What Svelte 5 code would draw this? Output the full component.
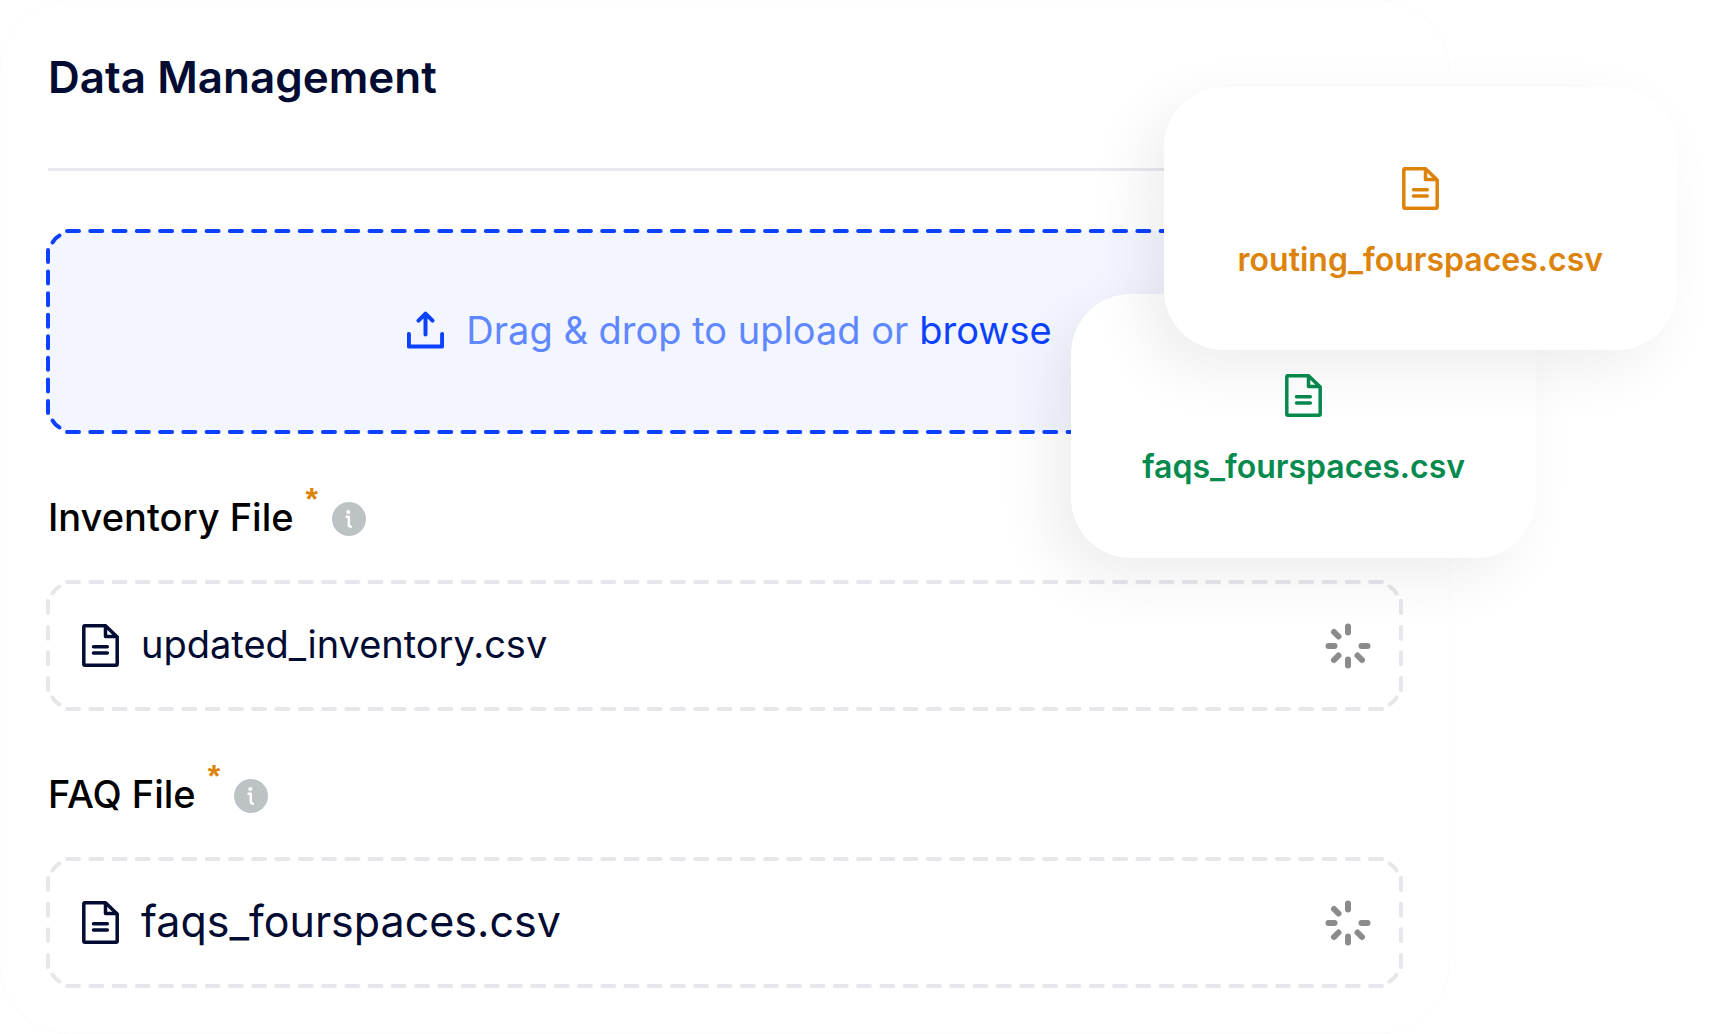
<script>
	const files = [
		{ id: 'inventory', label: 'Inventory File', name: 'updated_inventory.csv', large: false },
		{ id: 'faq', label: 'FAQ File', name: 'faqs_fourspaces.csv', large: true }
	]
	const cards = [
		{ name: 'faqs_fourspaces.csv', kind: 'faqs' },
		{ name: 'routing_fourspaces.csv', kind: 'routing' }
	]

	// gap that lets a side start and end on a full dash
	const dashes = (length, count) => `12 ${(length - 12) / count - 12}`
</script>

{#snippet side(x1, y1, x2, y2, length, count)}
	<line {x1} {y1} {x2} {y2} pathLength={length} stroke-dasharray={dashes(length, count)} />
{/snippet}

{#snippet corner(x, y, angle)}
	<svg {x} {y} width="1" height="1" overflow="visible">
		<path d="M4.500 11.500Q7 7 11.500 4.500" transform="rotate({angle})" />
	</svg>
{/snippet}

{#snippet dashedFrame(height, count)}
	<svg class="frame" aria-hidden="true">
		<svg class="rows" x="19" width="100%" height="100%" overflow="visible">
			{@render side('0', '0', '100%', '0', 1316, 56)}
			{@render side('0', '100%', '100%', '100%', 1316, 56)}
		</svg>
		<svg y="19" width="100%" height={height - 38} overflow="visible">
			{@render side('0', '0', '0', '100%', height - 38, count)}
			{@render side('100%', '0', '100%', '100%', height - 38, count)}
		</svg>
		{@render corner('0', '0', 0)}
		{@render corner('100%', '0', 90)}
		{@render corner('100%', '100%', 180)}
		{@render corner('0', '100%', 270)}
	</svg>
{/snippet}

{#snippet docIcon()}
	<svg class="docIcon" width="37" height="43" viewBox="0 0 37 43" aria-hidden="true">
		<path d="M3 1.700H23.500L35.200 13V40Q35.200 41.200 34 41.200H3Q1.800 41.200 1.800 40V3Q1.800 1.700 3 1.700Z" />
		<path d="M23.500 2.500V12.600H34.500M11.500 22.800H25.300M11.500 29.100H25.300" />
	</svg>
{/snippet}

<div class="page">
	<main class="panel">
		<h1>Data Management</h1>
		<hr />
		<div class="upload">
			{@render dashedFrame(201, 7)}
			<svg class="uploadIcon" width="37" height="38" viewBox="0 0 37 38" aria-hidden="true">
				<path d="M1.900 23V35.500H35.100V23M18.500 23.500V3M11.500 9.700L18.500 2.700L25.500 9.700" />
			</svg>
			<span>Drag &amp; drop to upload or</span>
			<button type="button" class="browse">browse</button>
		</div>

		{#each files as { id, label, name, large }}
			<section aria-labelledby={id}>
				<div class="labelRow">
					<h2 {id}>{label}</h2>
					<span class="required">*</span>
					<button type="button" class="info" aria-label="About {label}">
						<svg width="34" height="34" viewBox="0 0 34 34" aria-hidden="true">
							<circle cx="17" cy="17" r="17" fill="#bdc3c4" />
							<circle cx="16.300" cy="10" r="2" fill="#fff" />
							<path d="M14.600 14.700H16.800V22.500Q16.800 24.500 19 24.700" fill="none" stroke="#fff" stroke-width="2.500" stroke-linecap="round" stroke-linejoin="round" />
						</svg>
					</button>
				</div>
				<div class="fileBox">
					{@render dashedFrame(127, 3)}
					{@render docIcon()}
					<span class="fileName" class:large>{name}</span>
					<svg class="spinner" width="46" height="46" viewBox="-23 -23 46 46" role="img" aria-label="Loading">
						<path d="M0 -19.500V-13.500M0 13.500V19.500M-19.500 0H-13.500M13.500 0H19.500M-14 -14L-9.500 -9.500M-14 14L-9.500 9.500M14 14L9.500 9.500" />
					</svg>
				</div>
			</section>
		{/each}
	</main>

	{#each cards as { name, kind }}
		<div class="card {kind}">
			{@render docIcon()}
			<span>{name}</span>
		</div>
	{/each}
</div>

<style>
	:global(body) {
		background: #fff;
	}
	.page {
		position: relative;
		font-family: 'Inter', 'Liberation Sans', sans-serif;
		color: #020b32;
	}
	.panel {
		margin-right: 262px;
		padding: 50px 48px 48px;
		border-radius: 70px;
		background: #fff;
		box-shadow: inset 0 0 1px rgba(0, 0, 0, 0.08);
	}
	h1 {
		margin: 0;
		font-size: 44px;
		font-weight: 600;
		line-height: 54px;
	}
	hr {
		height: 3px;
		margin: 64px 0 60px;
		border: 0;
		background: #e8e8ed;
	}
	button {
		padding: 0;
		border: 0;
		background: none;
		font: inherit;
		cursor: pointer;
	}
	svg {
		flex: none;
	}
	.upload {
		position: relative;
		display: flex;
		align-items: center;
		justify-content: center;
		height: 201px;
		padding: 0 0 4px 10px;
		box-sizing: border-box;
		border-radius: 24px;
		background: #f3f6ff;
		color: #5f87ff;
		font-size: 38px;
		line-height: 46px;
	}
	.uploadIcon {
		margin-right: 22px;
		fill: none;
		stroke: #0b41ff;
		stroke-width: 4;
		stroke-linecap: round;
		stroke-linejoin: round;
	}
	.browse {
		margin-left: 11px;
		color: #0b41ff;
	}
	.frame {
		position: absolute;
		inset: 0;
		width: 100%;
		height: 100%;
		overflow: visible;
		fill: none;
		stroke: #e6e7eb;
		stroke-width: 4;
		stroke-linecap: round;
		pointer-events: none;
	}
	.rows {
		width: calc(100% - 38px);
	}
	.upload .frame {
		stroke: #0b41ff;
	}
	.labelRow {
		display: flex;
		align-items: flex-start;
		margin: 62px 0 42px;
	}
	h2 {
		margin: 0;
		color: #000;
		font-size: 38px;
		font-weight: 500;
		line-height: 46px;
	}
	.required {
		margin: -11px 14px 0 12px;
		color: #dd830a;
		font: bold 32px/32px 'Liberation Sans', sans-serif;
	}
	.info {
		height: 34px;
		margin-top: 8px;
	}
	.info svg {
		display: block;
	}
	.fileBox {
		position: relative;
		display: flex;
		align-items: center;
		height: 127px;
		padding: 0 30px 0 34px;
		box-sizing: border-box;
	}
	.fileName {
		margin: 0 auto 4px 22px;
		font-size: 38px;
		line-height: 52px;
	}
	.fileName.large {
		font-size: 43px;
	}
	.docIcon {
		fill: none;
		stroke: currentColor;
		stroke-width: 3.5;
		stroke-linecap: round;
		stroke-linejoin: round;
	}
	.spinner {
		fill: none;
		stroke: #8b8b8b;
		stroke-width: 6;
		stroke-linecap: round;
	}
	/* file cards floating over the panel */
	.card {
		position: absolute;
		display: flex;
		flex-direction: column;
		align-items: center;
		gap: 30px;
		padding: 80px 71px 71px;
		border-radius: 60px;
		background: #fff;
		box-shadow: -20px 20px 60px rgba(0, 0, 0, 0.07);
		font-size: 32px;
		font-weight: 600;
		line-height: 40px;
	}
	.faqs {
		top: 294px;
		right: 175px;
		color: #068a4e;
	}
	.routing {
		top: 87px;
		right: 34px;
		padding: 80px 74px 70px;
		color: #dd830a;
	}
</style>
